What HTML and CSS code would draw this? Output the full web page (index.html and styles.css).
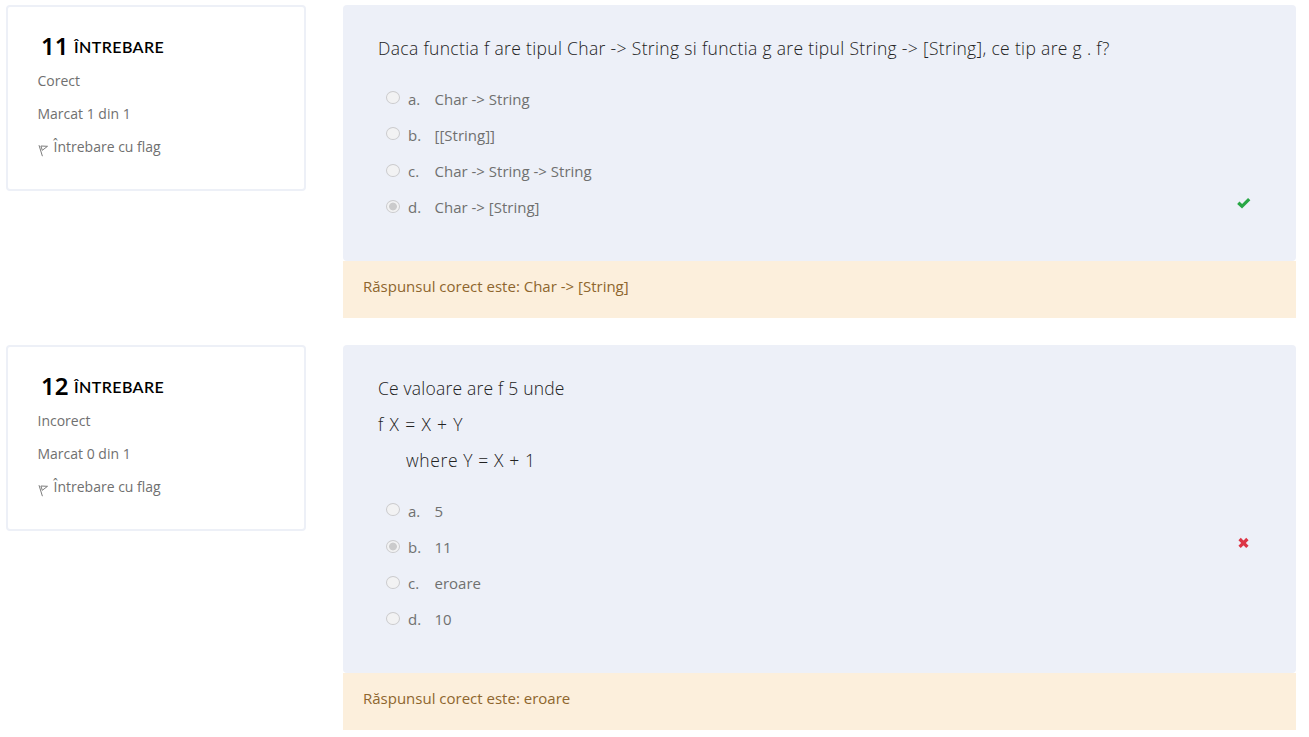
FILE: index.html
```html
<!DOCTYPE html>
<html lang="ro">
<head>
<meta charset="utf-8">
<title>Test</title>
<link rel="stylesheet" href="styles.css">
</head>
<body>
<main class="quiz">
  <section class="question">
    <aside class="info">
      <h3 class="heading"><span class="number">11</span><span class="label">ÎNTREBARE</span></h3>
      <p class="meta">Corect</p>
      <p class="meta">Marcat 1 din 1</p>
      <p class="meta flagged"><svg class="flag" viewBox="0 0 11 13"><path d="M1 1.2 4.4 12.2M2.9 2 9.5 2.3 4.3 6.3Z"/></svg><span>Întrebare cu flag</span></p>
    </aside>
    <div class="content">
      <div class="formulation">
        <div class="text"><p class="prompt">Daca functia f are tipul Char -&gt; String si functia g are tipul String -&gt; [String], ce tip are g . f?</p></div>
        <div class="answers">
          <div class="answer"><i class="radio"></i><span class="letter">a.</span><span>Char -&gt; String</span></div>
          <div class="answer"><i class="radio"></i><span class="letter">b.</span><span>[[String]]</span></div>
          <div class="answer"><i class="radio low"></i><span class="letter">c.</span><span>Char -&gt; String -&gt; String</span></div>
          <div class="answer"><i class="radio low checked"></i><span class="letter">d.</span><span>Char -&gt; [String]</span><svg class="mark correct" viewBox="0 0 14 12"><path d="M1.3 5.8 5 9.3 12.2 2.2"/></svg></div>
        </div>
      </div>
      <div class="feedback">Răspunsul corect este: Char -&gt; [String]</div>
    </div>
  </section>
  <section class="question">
    <aside class="info">
      <h3 class="heading"><span class="number">12</span><span class="label">ÎNTREBARE</span></h3>
      <p class="meta">Incorect</p>
      <p class="meta">Marcat 0 din 1</p>
      <p class="meta flagged"><svg class="flag" viewBox="0 0 11 13"><path d="M1 1.2 4.4 12.2M2.9 2 9.5 2.3 4.3 6.3Z"/></svg><span>Întrebare cu flag</span></p>
    </aside>
    <div class="content">
      <div class="formulation">
        <div class="text">
          <p class="prompt intro">Ce valoare are f 5 unde</p>
          <p class="prompt equation">f X = X + Y</p>
          <p class="prompt where">where Y = X + 1</p>
        </div>
        <div class="answers">
          <div class="answer"><i class="radio"></i><span class="letter">a.</span><span>5</span></div>
          <div class="answer"><i class="radio low checked"></i><span class="letter">b.</span><span>11</span><svg class="mark wrong" viewBox="0 0 14 12"><path d="M2.6 2 10.4 9.8M10.4 2 2.6 9.8"/></svg></div>
          <div class="answer"><i class="radio low"></i><span class="letter">c.</span><span>eroare</span></div>
          <div class="answer"><i class="radio low"></i><span class="letter">d.</span><span>10</span></div>
        </div>
      </div>
      <div class="feedback">Răspunsul corect este: eroare</div>
    </div>
  </section>
</main>
</body>
</html>
```
FILE: styles.css
```css
* { box-sizing: border-box; }
body { margin: 0; background: #fff; color: #707070; font: 15px "Open Sans", sans-serif; }
p, h3 { margin: 0; }
.quiz { display: flex; flex-direction: column; gap: 27px; padding: 5px 13px 0 6px; }
.question { display: flex; align-items: flex-start; justify-content: space-between; }
.info { width: 300px; height: 186px; padding: 24px 29.5px 0; border: 2px solid #edf0f7; border-radius: 4px; }
.heading { display: flex; align-items: center; gap: 5px; height: 33px; padding-left: 3.5px; color: #000; }
.number { width: 28px; font: 560 24px/28px "Noto Sans", sans-serif; padding-bottom: 4px; }
.label { font: 600 16px/20px Lato, sans-serif; letter-spacing: .42px; padding-bottom: 2px; }
.meta { height: 33px; line-height: 33px; font-size: 14px; }
.flagged { display: flex; gap: 5px; }
.flag { width: 11px; height: 13px; margin-top: 13.5px; fill: none; stroke: #7c7c7c; stroke-width: 1; }
.content { width: 953px; }
.formulation { padding: 25px 35px 36px; border-radius: 4px; background: #edf0f8; }
.prompt { height: 36px; line-height: 36px; color: #222; font-size: 17.5px; font-weight: 300; letter-spacing: .335px; white-space: pre; }
.intro { letter-spacing: .2px; }
.equation { letter-spacing: .85px; }
.where { padding-left: 28px; letter-spacing: .62px; }
.answers { padding-top: 15px; }
.answer { display: flex; height: 36px; line-height: 36px; }
.radio { width: 14px; height: 13px; margin: 10px 8px 0 8px; border: 1px solid #cbcbcd; border-radius: 50%; background: #f2f2f3; }
.low { margin-top: 11px; }
.checked { background: radial-gradient(circle, #cbcbcc 3.5px, #f2f2f3 4.3px); }
.letter { width: 26.5px; }
.mark { width: 14px; height: 12px; margin: 8px 10px 0 auto; fill: none; stroke-width: 3.3; }
.correct { stroke: #28a745; }
.wrong { stroke: #dc3545; }
.feedback { height: 57px; padding: 7px 20px; line-height: 36px; background: #fcefdc; color: #8e662e; }
```
